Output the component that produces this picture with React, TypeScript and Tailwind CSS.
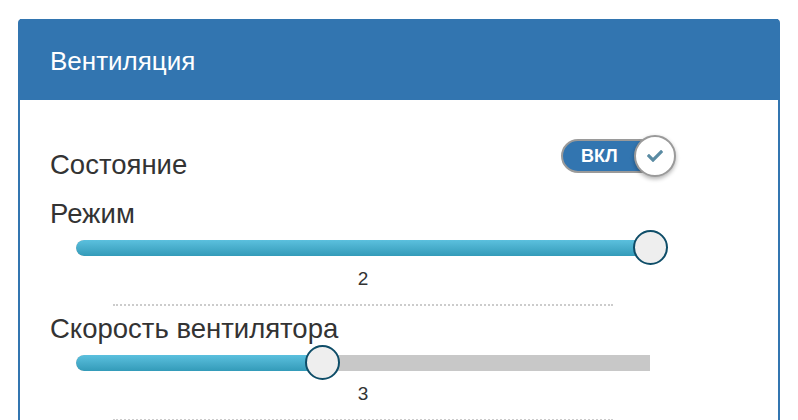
import { FaCheck } from 'react-icons/fa';

const Slider = ({ label, value, max }: { label: string; value: number; max: number }) => {
  const pct = (value / max) * 100;
  return (
    <div className="flex flex-col">
      <div className="text-[27.5px] leading-[30px] text-[#333]">{label}</div>
      <div className="relative mt-[1px] ml-[26px] w-[574px] h-[36px] flex items-center">
        <div className="w-full h-4 rounded-l-full bg-[#c8c8c8] overflow-hidden">
          <div
            className="h-full rounded-l-full bg-linear-to-b from-[#5bc0de] to-[#339bb9]"
            style={{ width: `${pct}%` }}
          ></div>
        </div>
        <div
          className="absolute top-[0px] w-[35px] h-[35px] -ml-[17px] rounded-full border-2 border-[#0e4d68] bg-[#eeeeee]"
          style={{ left: `${pct}%` }}
        ></div>
      </div>
      <div className="mt-[1px] ml-[26px] w-[574px]">
        <div className="mx-auto w-[500px] pb-[13px] border-b-2 border-dotted border-[#cccccc] text-center text-[19px] leading-[24px] text-[#333]">
          {value}
        </div>
      </div>
    </div>
  );
};

const App = () => {
  return (
    <div className="min-h-screen bg-white pt-[19px] px-[18px] font-['Liberation_Sans',Arial,sans-serif]">
      <div className="w-[762px] border-2 border-[#3275b0] rounded-t-[4px] bg-white">
        <div className="h-[79px] -mt-[2px] pt-[2px] bg-[#3275b0] flex items-center pl-[30px] box-content">
          <h2 className="text-[26px] leading-[30px] text-white">Вентиляция</h2>
        </div>

        <div className="px-[30px] pt-[35px] pb-[40px]">
          <div className="flex items-start">
            <div className="w-[511px] mt-[15px] text-[27.5px] leading-[30px] text-[#333]">Состояние</div>
            <div className="flex items-center">
              <div className="w-[96px] h-[34px] rounded-full border-2 border-[#9a9a9a] bg-[#3275b0] flex items-center pl-[18px]">
                <span className="text-[18px] font-bold text-white leading-none">ВКЛ</span>
              </div>
              <div className="-ml-[23px] w-[42px] h-[42px] rounded-full border-2 border-[#9a9a9a] bg-white shadow-[0_2px_4px_rgba(0,0,0,0.3)] flex items-center justify-center">
                <FaCheck className="text-[#5a8ba3]" size={16} />
              </div>
            </div>
          </div>

          <div className="mt-[19px] flex flex-col gap-[8px]">
            <Slider label="Режим" value={2} max={2} />
            <Slider label="Скорость вентилятора" value={3} max={7} />
          </div>
        </div>
      </div>
    </div>
  );
};

export default App;
